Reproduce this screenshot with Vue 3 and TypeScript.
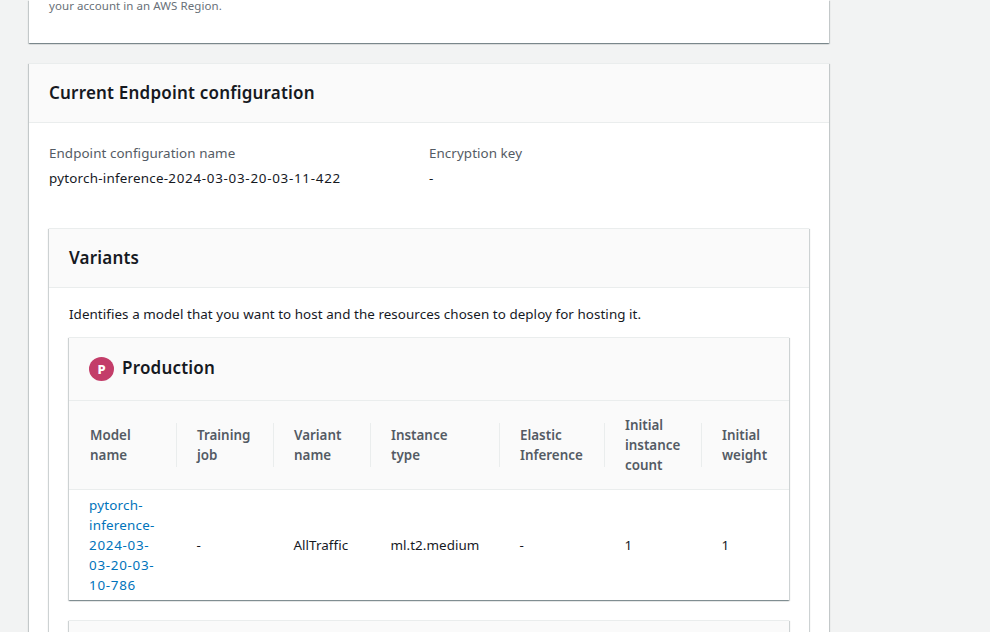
<script setup lang="ts">
interface Column {
  label: string
  value: string
}

const configName = { prefix: 'pytorch-inference-', stamp: '2024-03-03-20-03-11-422' }
const modelName = { prefix: 'pytorch-\ninference-\n', stamp: '2024-03-\n03-20-03-\n10-786' }

const columns: Column[] = [
  { label: 'Model\nname', value: '' },
  { label: 'Training\njob', value: '-' },
  { label: 'Variant\nname', value: 'AllTraffic' },
  { label: 'Instance\ntype', value: 'ml.t2.medium' },
  { label: 'Elastic\nInference', value: '-' },
  { label: 'Initial\ninstance\ncount', value: '1' },
  { label: 'Initial\nweight', value: '1' },
]
</script>

<template>
  <main class="page">
    <section class="card card-previous">
      <p class="hint">your account in an AWS Region.</p>
    </section>

    <section class="card card-config">
      <header class="card-header"><h2>Current Endpoint configuration</h2></header>
      <div class="card-body">
        <dl class="details">
          <div>
            <dt>Endpoint configuration name</dt>
            <dd><span class="prefix">{{ configName.prefix }}</span><span class="stamp">{{ configName.stamp }}</span></dd>
          </div>
          <div>
            <dt>Encryption key</dt>
            <dd>-</dd>
          </div>
        </dl>

        <section class="card">
          <header class="card-header"><h2>Variants</h2></header>
          <div class="card-body variants-body">
            <p class="description">Identifies a model that you want to host and the resources chosen to deploy for hosting it.</p>

            <section class="card">
              <header class="card-header production-header">
                <span class="badge">P</span>
                <h2>Production</h2>
              </header>
              <div class="row head" role="row">
                <div v-for="(column, i) in columns" :key="i" class="cell" role="columnheader">{{ column.label }}</div>
              </div>
              <div class="row values" role="row">
                <div v-for="(column, i) in columns" :key="i" class="cell" role="cell">
                  <a v-if="i === 0" class="link"><span class="prefix">{{ modelName.prefix }}</span><span class="stamp">{{ modelName.stamp }}</span></a>
                  <span v-else>{{ column.value }}</span>
                </div>
              </div>
            </section>

            <section class="card card-next">
              <header class="card-header"></header>
            </section>
          </div>
        </section>
      </div>
    </section>
  </main>
</template>

<style>
body {
  overflow: hidden;
  background: #f2f3f3;
}
</style>

<style scoped>
.page {
  box-sizing: border-box;
  width: 990px;
  height: 632px;
  overflow: hidden;
  padding: 0 161px 0 29px;
  background: #f2f3f3;
  color: #16191f;
  font: 13.4px/20px "Noto Sans", "Open Sans", sans-serif;
  letter-spacing: 0.066px;
}
h2, p, dl, dd {
  margin: 0;
}
.card {
  box-sizing: border-box;
  border-top: 1px solid #eaeded;
  background: #fff;
  box-shadow:
    0 1px 1px 0 rgba(0, 28, 36, 0.3),
    1px 1px 1px 0 rgba(0, 28, 36, 0.15),
    -1px 1px 1px 0 rgba(0, 28, 36, 0.15);
}
.card + .card {
  margin-top: 20px;
}
.card-previous {
  height: 43px;
  border-top: 0;
  padding: 0 20px;
}
.hint {
  color: #687078;
  font-size: 11.5px;
  line-height: 11px;
}
.card-config {
  height: 640px;
}
.card-header {
  box-sizing: border-box;
  display: flex;
  align-items: center;
  height: 59px;
  padding: 0 20px;
  border-bottom: 1px solid #eaeded;
  background: #fafafa;
}
h2 {
  font-size: 17px;
  font-weight: 600;
  line-height: 22px;
  letter-spacing: 0.2px;
}
.card-body {
  padding: 20px;
}
.details {
  display: grid;
  grid-template-columns: 380px 380px;
  margin-bottom: 40px;
}
dt {
  margin-bottom: 5px;
  color: #545b64;
}
.prefix {
  letter-spacing: 0.22px;
}
.stamp {
  letter-spacing: 0.72px;
}
.variants-body {
  padding-top: 16px;
}
.description {
  margin-bottom: 13px;
}
.production-header {
  height: 63px;
  padding-bottom: 2px;
  gap: 8px;
}
.badge {
  display: grid;
  place-items: center;
  width: 25px;
  height: 24px;
  margin-top: 2px;
  border-radius: 50%;
  background: #c33d69;
  color: #fff;
  font-size: 13px;
  font-weight: 800;
}
.row {
  display: grid;
  grid-template-columns: 108px 97px 97px 129px 105px 97px 87px;
  align-items: center;
}
.cell {
  padding-left: 19.4px;
  white-space: pre-line;
}
.head {
  height: 89px;
  box-sizing: border-box;
  border-bottom: 1px solid #eaeded;
  background: #fafafa;
  color: #545b64;
  font-weight: 600;
  letter-spacing: 0;
}
.head .cell {
  display: flex;
  align-items: center;
  height: 44px;
  padding-left: 20px;
  border-right: 1px solid #eaeded;
}
.head .cell:first-child {
  padding-left: 21px;
}
.head .cell:last-child {
  border-right: 0;
}
.values {
  height: 110px;
}
.values .cell:first-child {
  padding-left: 20px;
}
.link {
  color: #0073bb;
}
.card-next {
  height: 80px;
}
</style>
